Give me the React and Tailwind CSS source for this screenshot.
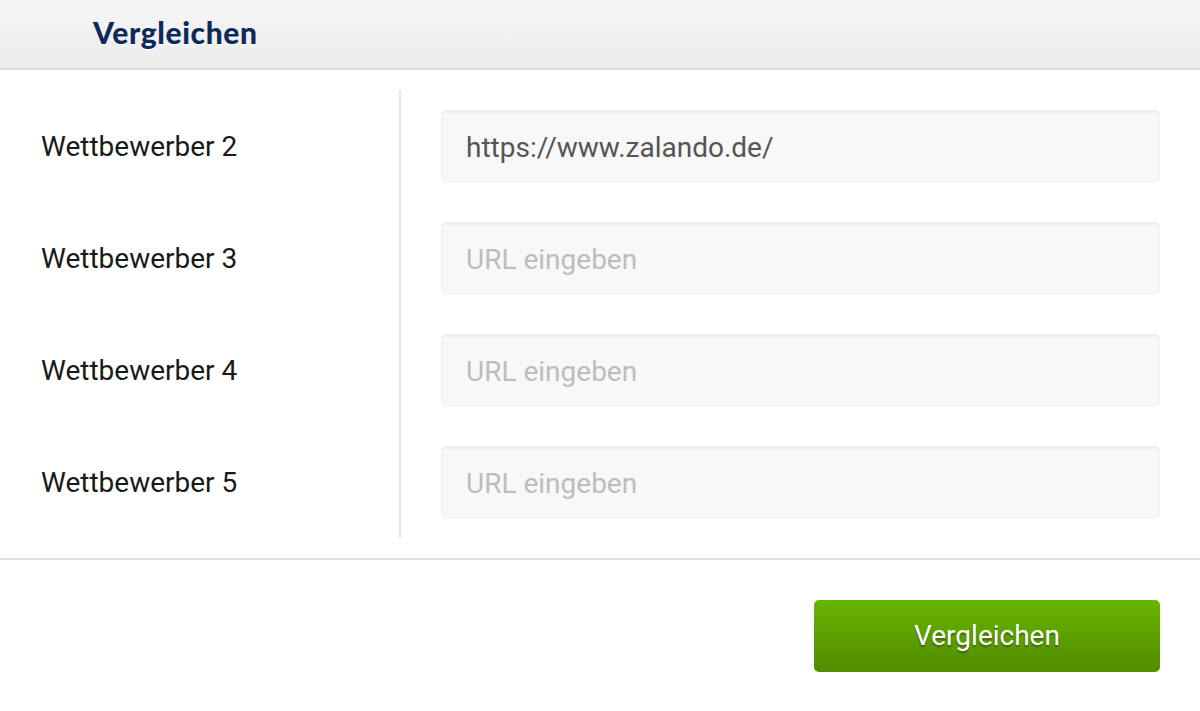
import React from 'react';

const rows = [
  { label: 'Wettbewerber 2', value: 'https://www.zalando.de/' },
  { label: 'Wettbewerber 3', value: '' },
  { label: 'Wettbewerber 4', value: '' },
  { label: 'Wettbewerber 5', value: '' },
];

export default function App() {
  return (
    <div className="w-[1200px] h-[711px] bg-white overflow-hidden font-['Roboto',sans-serif]">
      {/* Header */}
      <div className="h-[70px] bg-gradient-to-b from-[#f6f6f6] to-[#ececec] border-b-2 border-[#dadada] flex items-center pl-[93px]">
        <h1 className="font-['Lato',sans-serif] font-black text-[30px] text-[#0d2a58] tracking-[0.6px] [text-shadow:0_1px_0_#ffffff] pb-[4px]">
          Vergleichen
        </h1>
      </div>

      {/* Form body */}
      <div className="flex py-5 border-b-2 border-[#dedede]">
        <div className="w-[401px] shrink-0 border-r-2 border-[#e6e6e6]">
          {rows.map((r) => (
            <div key={r.label} className="h-[112px] flex items-center pl-[41px] pt-[2px] text-[28px] text-[#1a1a1a]">
              {r.label}
            </div>
          ))}
        </div>
        <div className="flex-1 pl-[40px] pr-[40px]">
          {rows.map((r) => (
            <div key={r.label} className="h-[112px] flex items-center">
              <input
                defaultValue={r.value}
                placeholder="URL eingeben"
                className="w-full h-[72px] rounded-[5px] bg-[#f8f8f8] border border-[#f0f0f0] shadow-[inset_0_2px_2px_rgba(0,0,0,0.04)] px-[24px] pt-[2px] text-[28px] text-[#555555] placeholder:text-[#bdbdbd] outline-none font-['Roboto',sans-serif]"
              />
            </div>
          ))}
        </div>
      </div>

      {/* Footer */}
      <div className="flex justify-end pt-[40px] pr-[40px]">
        <button className="w-[346px] h-[72px] rounded-[5px] bg-gradient-to-b from-[#68b500] to-[#528c00] text-white text-[28px] font-['Roboto',sans-serif] [text-shadow:0_2px_2px_rgba(0,0,0,0.35)]">
          Vergleichen
        </button>
      </div>
    </div>
  );
}
